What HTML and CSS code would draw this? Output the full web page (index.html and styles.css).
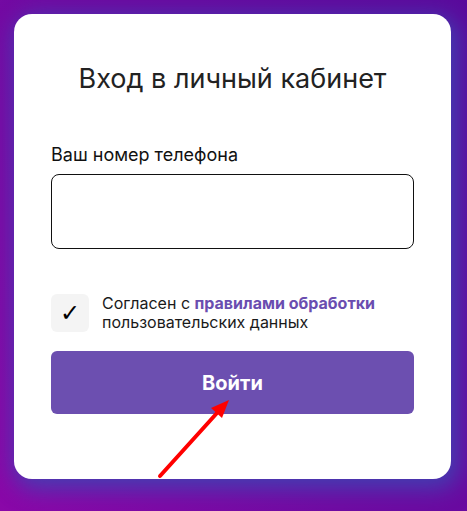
FILE: index.html
```html
<!DOCTYPE html>
<html lang="ru">
<head>
<meta charset="utf-8">
<link rel="stylesheet" href="styles.css">
</head>
<body>
<div class="page">
  <div class="card">
    <h1 class="title">Вход в личный кабинет</h1>
    <label class="label" for="phone">Ваш номер телефона</label>
    <input class="input" id="phone" type="text">
    <div class="agree">
      <div class="check">✓</div>
      <div class="agree-text">Согласен с <a class="link" href="#">правилами обработки</a><br>пользовательских данных</div>
    </div>
    <button class="btn">Войти</button>
  </div>
  <svg class="arrow" width="467" height="511" viewBox="0 0 467 511">
    <line x1="160" y1="476" x2="217" y2="413" stroke="#ff0000" stroke-width="4" stroke-linecap="round"/>
    <polygon points="229,400 211,408 222,418" fill="#ff0000"/>
  </svg>
</div>
</body>
</html>
```
FILE: styles.css
```css
* { box-sizing: border-box; }
html, body { margin: 0; padding: 0; }
body {
  width: 467px;
  height: 511px;
  overflow: hidden;
  font-family: Inter, "Noto Sans", sans-serif;
  background: linear-gradient(60deg, #8a08a8 0%, #700aa2 45%, #5a0a9c 100%);
}
.page {
  position: relative;
  padding: 14px 16px 0 14px;
  height: 511px;
}
.card {
  width: 437px;
  height: 465px;
  background: #fff;
  border-radius: 18px;
  box-shadow: 4px 6px 22px 4px rgba(60, 70, 180, 0.85);
  padding: 48px 37px 0 37px;
  display: flex;
  flex-direction: column;
}
.title {
  margin: 0;
  font-size: 27px;
  line-height: 33px;
  font-weight: 400;
  color: #222;
  text-align: center;
}
.label {
  margin-top: 49px;
  font-size: 18px;
  line-height: 22px;
  color: #111;
}
.input {
  margin-top: 8px;
  height: 75px;
  width: 100%;
  border: 1px solid #111;
  border-radius: 8px;
  background: #fff;
  outline: none;
}
.agree {
  margin-top: 45px;
  display: flex;
  align-items: flex-start;
  gap: 13px;
}
.check {
  width: 38px;
  height: 38px;
  flex: none;
  border-radius: 6px;
  background: #f4f4f4;
  display: flex;
  align-items: center;
  justify-content: center;
  font-size: 24px;
  font-weight: 700;
  color: #000;
  font-family: "DejaVu Sans", sans-serif;
}
.agree-text {
  font-size: 16px;
  line-height: 19px;
  color: #1a1a1a;
}
.link {
  color: #6a4db0;
  font-weight: 700;
  text-decoration: none;
}
.btn {
  margin-top: 19px;
  height: 63px;
  width: 100%;
  border: none;
  border-radius: 6px;
  background: #6c4fb0;
  color: #fff;
  font-family: Inter, "Noto Sans", sans-serif;
  font-size: 20px;
  font-weight: 700;
}
.arrow {
  position: absolute;
  left: 0;
  top: 0;
  pointer-events: none;
}
```
